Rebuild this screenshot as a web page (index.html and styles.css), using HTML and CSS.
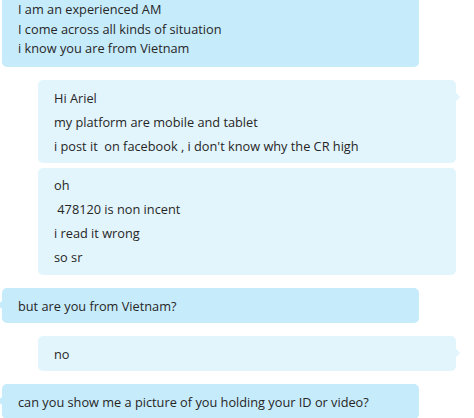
FILE: index.html
```html
<!DOCTYPE html>
<html>
<head>
<meta charset="utf-8">
<link rel="stylesheet" href="styles.css">
</head>
<body>
<div class="chat">
  <div class="msg in first">
    <p>I am an experienced AM</p>
    <p>I come across all kinds of situation</p>
    <p>i know you are from Vietnam</p>
  </div>
  <div class="msg out tail">
    <p>Hi Ariel</p>
    <p>my platform are mobile and tablet</p>
    <p>i post it&nbsp; on facebook , i don't know why the CR high</p>
  </div>
  <div class="msg out cont">
    <p>oh</p>
    <p>&nbsp;478120 is non incent</p>
    <p>i read it wrong</p>
    <p>so sr</p>
  </div>
  <div class="msg in tail">
    <p>but are you from Vietnam?</p>
  </div>
  <div class="msg out tail">
    <p>no</p>
  </div>
  <div class="msg in tail">
    <p>can you show me a picture of you holding your ID or video?</p>
  </div>
</div>
</body>
</html>
```

FILE: styles.css
```css
html, body {
  margin: 0;
  padding: 0;
  background: #ffffff;
}
body {
  font-family: "Open Sans", "Noto Sans", sans-serif;
  font-size: 12.75px;
  color: #262626;
  overflow: hidden;
  height: 418px;
}
.chat {
  display: flex;
  flex-direction: column;
  gap: 13px;
}
.msg {
  position: relative;
  border-radius: 5px;
  padding: 6px 16px 5px 16px;
}
.msg p {
  margin: 0;
  line-height: 24px;
  white-space: nowrap;
}
.in {
  background: #c6ebfb;
  margin-left: 2px;
  width: 385px;
}
.out {
  background: #e3f5fc;
  margin-left: 38px;
  width: 386px;
}
.first {
  margin-top: -8px;
  padding-top: 8px;
  padding-bottom: 8px;
  border-radius: 0 0 5px 5px;
}
.first p {
  line-height: 19.5px;
}
.cont {
  margin-top: -8px;
  padding-top: 5px;
  padding-bottom: 6px;
}
.tail::before {
  content: "";
  position: absolute;
  top: 14px;
  width: 6px;
  height: 6px;
  border-radius: 1px;
  transform: rotate(45deg);
  background: inherit;
}
.in.tail::before {
  left: -3px;
}
.out.tail::before {
  right: -3px;
}
```
